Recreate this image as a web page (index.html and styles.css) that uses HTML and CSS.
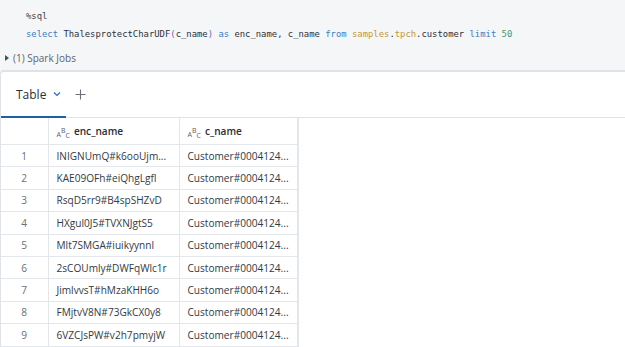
FILE: index.html
```html
<!DOCTYPE html>
<html>
<head>
<meta charset="utf-8">
<link rel="stylesheet" href="styles.css">
</head>
<body>
<div class="cell">
  <pre class="code"><span class="pl">%sql</span>
<span class="kw">select</span> ThalesprotectCharUDF<span class="par">(</span>c_name<span class="par">)</span> <span class="kw">as</span> enc_name, c_name <span class="kw">from</span> <span class="tb">samples</span>.<span class="tb">tpch</span>.customer <span class="kw">limit</span> <span class="num">50</span></pre>
  <div class="jobs"><span class="tri"></span><span>(1) Spark Jobs</span></div>
  <div class="panel">
    <div class="tabs">
      <div class="tab active">
        <span class="tab-label">Table</span>
        <svg class="chev" width="8" height="6" viewBox="0 0 8 6"><path d="M1 1.5 L4 4.5 L7 1.5" fill="none" stroke="#2a6ebb" stroke-width="1.2"/></svg>
      </div>
      <div class="plus">
        <svg width="11" height="11" viewBox="0 0 11 11"><path d="M5.5 0.5 V10.5 M0.5 5.5 H10.5" stroke="#6b7078" stroke-width="1.1" fill="none"/></svg>
      </div>
    </div>
    <table class="grid">
      <colgroup><col class="c0"><col class="c1"><col class="c2"></colgroup>
      <thead>
        <tr>
          <th></th>
          <th><span class="typ"><span class="ta">A</span><span class="tb2">B</span><span class="tc">C</span></span>enc_name</th>
          <th><span class="typ"><span class="ta">A</span><span class="tb2">B</span><span class="tc">C</span></span>c_name</th>
        </tr>
      </thead>
      <tbody>
        <tr><td>1</td><td>INIGNUmQ#k6ooUjm...</td><td>Customer#0004124...</td></tr>
        <tr><td>2</td><td>KAE09OFh#eiQhgLgfl</td><td>Customer#0004124...</td></tr>
        <tr><td>3</td><td>RsqD5rr9#B4spSHZvD</td><td>Customer#0004124...</td></tr>
        <tr><td>4</td><td>HXgul0J5#TVXNJgtS5</td><td>Customer#0004124...</td></tr>
        <tr><td>5</td><td>Mlt7SMGA#iuikyynnl</td><td>Customer#0004124...</td></tr>
        <tr><td>6</td><td>2sCOUmly#DWFqWlc1r</td><td>Customer#0004124...</td></tr>
        <tr><td>7</td><td>JimlvvsT#hMzaKHH6o</td><td>Customer#0004124...</td></tr>
        <tr><td>8</td><td>FMjtvV8N#73GkCX0y8</td><td>Customer#0004124...</td></tr>
        <tr><td>9</td><td>6VZCJsPW#v2h7pmyjW</td><td>Customer#0004124...</td></tr>
      </tbody>
    </table>
  </div>
</div>
</body>
</html>
```
FILE: styles.css
```css
html, body {
  margin: 0;
  padding: 0;
  background: #f5f6f8;
  overflow: hidden;
}
.cell {
  display: flex;
  flex-direction: column;
}
.code {
  margin: 0;
  padding: 7px 0 3px 26px;
  font-family: "DejaVu Sans Mono", monospace;
  font-size: 8.9px;
  line-height: 18px;
  color: #2c323b;
}
.kw { color: #3a7ec2; }
.par { color: #6a5fc1; }
.tb { color: #c4973a; }
.num { color: #3a9a73; }
.pl { color: #3c434d; }
.jobs {
  display: flex;
  align-items: center;
  height: 24px;
  padding-left: 5px;
  font-family: "Open Sans", sans-serif;
  font-size: 10px;
  color: #5c636d;
  gap: 4px;
}
.tri {
  width: 0;
  height: 0;
  border-left: 4px solid #4a5059;
  border-top: 3.5px solid transparent;
  border-bottom: 3.5px solid transparent;
}
.panel {
  background: #fff;
  border-top: 2px solid #dfe2e6;
  border-left: 1px solid #dfe2e6;
  border-top-left-radius: 4px;
  min-height: 300px;
}
.tabs {
  display: flex;
  align-items: stretch;
  height: 45px;
  border-bottom: 1px solid #e1e3e6;
}
.tab {
  display: flex;
  align-items: center;
  gap: 7px;
  padding: 0 10px 0 15px;
  width: 40px;
  border-bottom: 2px solid #1e5fa6;
  margin-bottom: -1px;
  font-family: "Open Sans", sans-serif;
  font-size: 12px;
  color: #2a2f36;
}
.chev { flex: none; }
.plus {
  display: flex;
  align-items: center;
  padding-left: 9px;
}
.grid {
  border-collapse: collapse;
  table-layout: fixed;
  width: 297px;
  font-family: "Open Sans", sans-serif;
  font-size: 10.1px;
  color: #333a44;
}
.c0 { width: 47px; }
.c1 { width: 131px; }
.c2 { width: 119px; }
.grid th, .grid td {
  border: 1px solid #e3e6ea;
  padding: 0 0 0 8px;
  text-align: left;
  white-space: nowrap;
  overflow: hidden;
  line-height: 14px;
}
.grid thead th { border-top: none; }
.grid th:first-child, .grid td:first-child {
  border-left: none;
  text-align: center;
  padding: 0;
  color: #6a7078;
}
.grid th:last-child, .grid td:last-child { border-right: 2px solid #e3e6ea; }
.grid thead th {
  height: 26px;
  font-weight: 600;
  color: #2a2f36;
}
.grid tbody td { height: 21.4px; }
.typ {
  display: inline-flex;
  align-items: flex-start;
  height: 12px;
  margin-right: 4px;
  vertical-align: -2px;
  font-size: 7px;
  font-weight: 400;
  color: #5a616b;
  line-height: 7px;
}
.ta { margin-top: 4px; }
.tb2 { margin-top: 0; }
.tc { margin-top: 5px; }
```
